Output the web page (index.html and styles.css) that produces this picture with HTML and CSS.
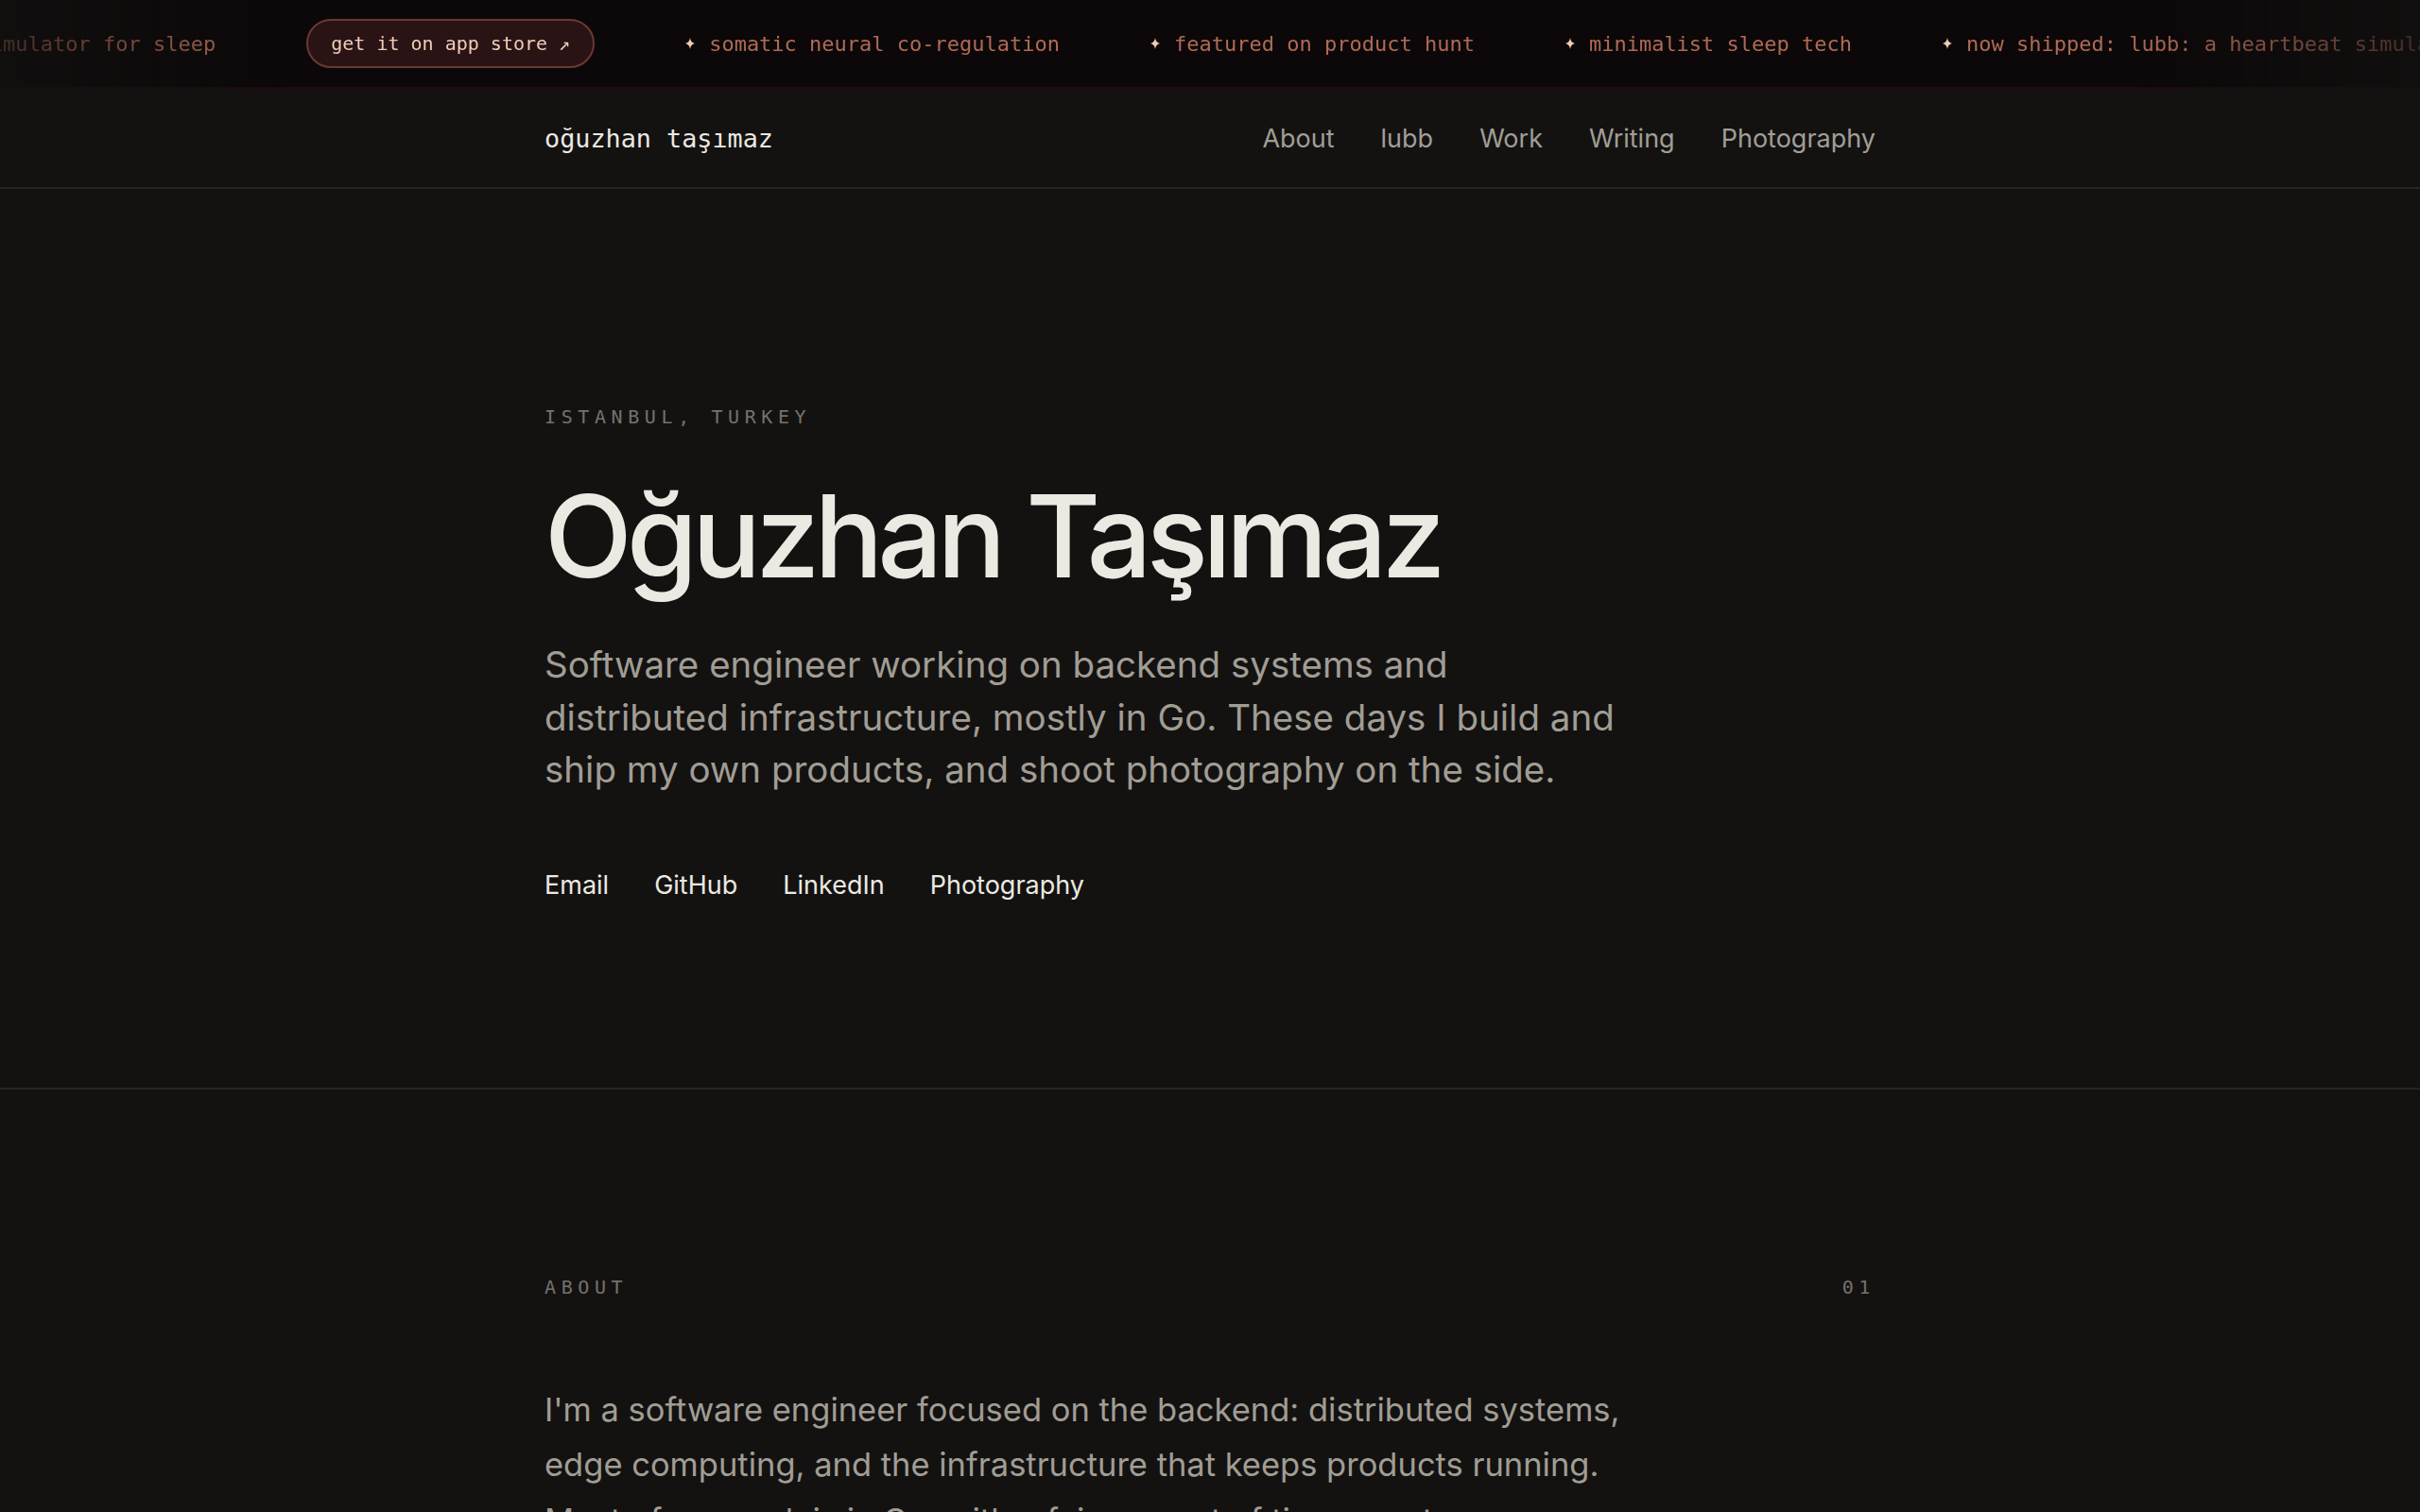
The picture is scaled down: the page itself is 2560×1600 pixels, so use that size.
FILE: index.html
```html
<!DOCTYPE html>
<html lang="en">
<head>
  <meta charset="UTF-8" />
  <title>Oğuzhan Taşımaz</title>
  <link rel="stylesheet" href="styles.css">
</head>
<body>

  <div class="ticker">
    <div class="ticker-track">
      <span class="ticker-item"><svg class="spark" viewBox="0 0 10 12"><path d="M5 0 Q5.6 5.2 10 6 Q5.6 6.8 5 12 Q4.4 6.8 0 6 Q4.4 5.2 5 0Z"/></svg>now shipped: lubb: a heartbeat simulator for sleep</span>
      <a class="ticker-pill" href="#">get it on app store ↗</a>
      <span class="ticker-item"><svg class="spark" viewBox="0 0 10 12"><path d="M5 0 Q5.6 5.2 10 6 Q5.6 6.8 5 12 Q4.4 6.8 0 6 Q4.4 5.2 5 0Z"/></svg>somatic neural co-regulation</span>
      <span class="ticker-item"><svg class="spark" viewBox="0 0 10 12"><path d="M5 0 Q5.6 5.2 10 6 Q5.6 6.8 5 12 Q4.4 6.8 0 6 Q4.4 5.2 5 0Z"/></svg>featured on product hunt</span>
      <span class="ticker-item"><svg class="spark" viewBox="0 0 10 12"><path d="M5 0 Q5.6 5.2 10 6 Q5.6 6.8 5 12 Q4.4 6.8 0 6 Q4.4 5.2 5 0Z"/></svg>minimalist sleep tech</span>
      <span class="ticker-item"><svg class="spark" viewBox="0 0 10 12"><path d="M5 0 Q5.6 5.2 10 6 Q5.6 6.8 5 12 Q4.4 6.8 0 6 Q4.4 5.2 5 0Z"/></svg>now shipped: lubb: a heartbeat simulator for sleep</span>
      <a class="ticker-pill" href="#">get it on app store ↗</a>
      <span class="ticker-item"><svg class="spark" viewBox="0 0 10 12"><path d="M5 0 Q5.6 5.2 10 6 Q5.6 6.8 5 12 Q4.4 6.8 0 6 Q4.4 5.2 5 0Z"/></svg>somatic neural co-regulation</span>
    </div>
  </div>

  <header class="nav">
    <div class="container nav-inner">
      <a class="logo" href="#">oğuzhan taşımaz</a>
      <nav class="nav-links">
        <a href="#about">About</a>
        <a href="#lubb">lubb</a>
        <a href="#work">Work</a>
        <a href="#writing">Writing</a>
        <a href="#photography">Photography</a>
      </nav>
    </div>
  </header>

  <section class="hero">
    <div class="container">
      <p class="eyebrow">Istanbul, Turkey</p>
      <h1>Oğuzhan Taşımaz</h1>
      <p class="lead">Software engineer working on backend systems and distributed infrastructure, mostly in Go. These days I build and ship my own products, and shoot photography on the side.</p>
      <div class="hero-links">
        <a href="#">Email</a>
        <a href="#">GitHub</a>
        <a href="#">LinkedIn</a>
        <a href="#">Photography</a>
      </div>
    </div>
  </section>

  <section class="section" id="about">
    <div class="container">
      <div class="section-head">
        <span class="eyebrow">About</span>
        <span class="eyebrow">01</span>
      </div>
      <p class="body-text">I'm a software engineer focused on the backend: distributed systems, edge computing, and the infrastructure that keeps products running. Most of my work is in Go, with a fair amount of time spent on databases, queues and the tooling around them.</p>
    </div>
  </section>

</body>
</html>
```

FILE: styles.css
```css
body {
  margin: 0;
  background: #131211;
  color: #ece9e2;
  font-family: 'Inter', 'Noto Sans', sans-serif;
}
a {
  color: inherit;
  text-decoration: none;
}
.container {
  max-width: 1408px;
  margin: 0 auto;
}

/* ticker */
.ticker {
  height: 92px;
  background: #0c0809;
  border-bottom: 2px solid #1c0b0f;
  overflow: hidden;
  -webkit-mask-image: linear-gradient(90deg, rgba(0,0,0,0.3), #000 12%, #000 88%, rgba(0,0,0,0.3));
  mask-image: linear-gradient(90deg, rgba(0,0,0,0.3), #000 12%, #000 88%, rgba(0,0,0,0.3));
}
.ticker-track {
  display: flex;
  align-items: center;
  gap: 96px;
  height: 100%;
  white-space: nowrap;
  font-family: 'DejaVu Sans Mono', monospace;
  transform: translateX(-459px);
}
.ticker-item {
  display: flex;
  align-items: center;
  gap: 15px;
  font-size: 22px;
  color: #b06a55;
}
.spark {
  width: 10px;
  height: 12px;
  fill: #f4cdae;
}
.ticker-pill {
  display: flex;
  align-items: center;
  height: 48px;
  padding: 0 24px;
  border: 2px solid #6c3830;
  border-radius: 26px;
  background: #2a1315;
  color: #f1cdb6;
  font-size: 20px;
}

/* nav */
.nav {
  border-bottom: 2px solid #262522;
}
.nav-inner {
  display: flex;
  justify-content: space-between;
  align-items: center;
  height: 104px;
}
.logo {
  font-family: 'DejaVu Sans Mono', monospace;
  font-size: 26.8px;
  color: #ece9e2;
}
.nav-links {
  display: flex;
  gap: 49px;
  font-size: 27px;
  color: #a19e96;
}

/* hero */
.hero {
  border-bottom: 2px solid #262522;
  padding: 229px 0 198px;
}
.eyebrow {
  margin: 0;
  font-family: 'DejaVu Sans Mono', monospace;
  font-size: 20px;
  letter-spacing: 0.28em;
  text-transform: uppercase;
  color: #75726c;
}
h1 {
  margin: 48px 0 0;
  font-size: 121px;
  font-weight: 500;
  letter-spacing: -0.047em;
  line-height: 1.1;
  color: #ece9e2;
}
.lead {
  margin: 42px 0 0;
  max-width: 1150px;
  font-size: 38.5px;
  line-height: 55.5px;
  color: #a19d94;
}
.hero-links {
  display: flex;
  gap: 48px;
  margin-top: 77px;
  font-size: 27px;
  color: #ece9e2;
}

/* sections */
.section {
  padding: 197px 0 120px;
}
.section-head {
  display: flex;
  justify-content: space-between;
  align-items: center;
}
.body-text {
  margin: 89px 0 0;
  max-width: 1160px;
  font-size: 34.5px;
  line-height: 58.8px;
  color: #a19d94;
}
```
